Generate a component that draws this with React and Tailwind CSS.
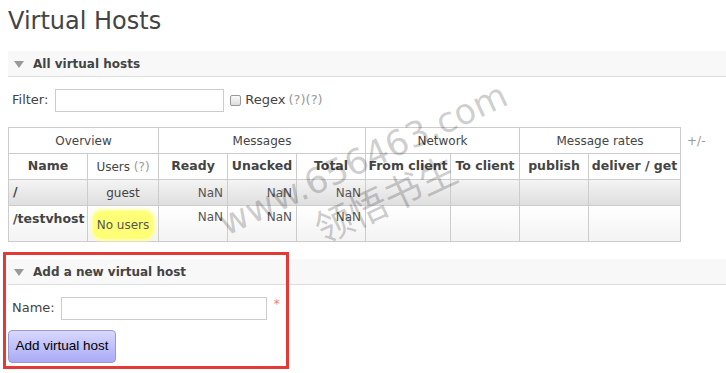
import React from 'react';

const font = { fontFamily: '"DejaVu Sans", Verdana, sans-serif' };

const SectionHeader = ({ title }) => (
    <div className="flex items-center h-[26px] bg-[#f8f8f8] border-b border-[#ddd] pl-[6px]">
        <svg width="10" height="7" viewBox="0 0 10 7" className="mr-[9px] mt-[1px]">
            <polygon points="0,0 10,0 5,7" fill="#999" />
        </svg>
        <span className="text-[12px] font-bold text-[#444]">{title}</span>
    </div>
);

const cols = [79, 71, 69, 69, 69, 85, 69, 69, 92];

const App = () => {
    return (
        <div className="relative w-[726px] h-[373px] bg-white text-[#444] overflow-hidden" style={font}>
            <h1 className="text-[24px] leading-none font-normal pl-[8px] pt-[9px] text-[#444]">Virtual Hosts</h1>

            <div className="ml-[8px] mt-[18px]">
                <SectionHeader title="All virtual hosts" />
                <div className="flex items-center h-[22px] mt-[12px] pl-[4px] text-[13px]">
                    <span>Filter:</span>
                    <input className="ml-[7px] w-[169px] h-[23px] border border-[#ccc] bg-white" />
                    <span className="ml-[6px] w-[11px] h-[11px] rounded-[2px] border border-[#999] bg-gradient-to-b from-[#fafafa] to-[#ddd]" />
                    <span className="ml-[4px]">Regex</span>
                    <span className="ml-[3px] text-[#999]">(?)(?)</span>
                </div>

                <div className="flex items-start mt-[16px]">
                    <table className="table-fixed w-[672px] border-collapse text-[12px]">
                        <colgroup>
                            {cols.map((w, i) => (
                                <col key={i} style={{ width: w }} />
                            ))}
                        </colgroup>
                        <thead>
                            <tr className="h-[26px]">
                                <th colSpan={2} className="border border-[#ccc] font-normal">Overview</th>
                                <th colSpan={3} className="border border-[#ccc] font-normal">Messages</th>
                                <th colSpan={2} className="border border-[#ccc] font-normal">Network</th>
                                <th colSpan={2} className="border border-[#ccc] font-normal">Message rates</th>
                            </tr>
                            <tr className="h-[26px] text-[12.5px]">
                                <th className="border border-[#ccc] font-bold">Name</th>
                                <th className="border border-[#ccc] font-normal text-[12px]">Users <span className="text-[#999]">(?)</span></th>
                                <th className="border border-[#ccc] font-bold">Ready</th>
                                <th className="border border-[#ccc] font-bold">Unacked</th>
                                <th className="border border-[#ccc] font-bold">Total</th>
                                <th className="border border-[#ccc] font-bold whitespace-nowrap">From client</th>
                                <th className="border border-[#ccc] font-bold whitespace-nowrap">To client</th>
                                <th className="border border-[#ccc] font-bold">publish</th>
                                <th className="border border-[#ccc] font-bold whitespace-nowrap">deliver / get</th>
                            </tr>
                        </thead>
                        <tbody>
                            <tr className="h-[26px] bg-gradient-to-b from-[#f4f4f4] to-[#dedede]">
                                <td className="border border-[#ccc] px-[4px] font-bold text-[12.5px]">/</td>
                                <td className="border border-[#ccc] text-center">guest</td>
                                <td className="border border-[#ccc] text-right pr-[4px] text-[#555]">NaN</td>
                                <td className="border border-[#ccc] text-right pr-[4px] text-[#555]">NaN</td>
                                <td className="border border-[#ccc] text-right pr-[4px] text-[#555]">NaN</td>
                                <td className="border border-[#ccc]" />
                                <td className="border border-[#ccc]" />
                                <td className="border border-[#ccc]" />
                                <td className="border border-[#ccc]" />
                            </tr>
                            <tr className="h-[36px] bg-gradient-to-b from-white to-[#f3f3f3]">
                                <td className="border border-[#ccc] px-[4px] font-bold text-[12.5px] align-top pt-[4px]">/testvhost</td>
                                <td className="border border-[#ccc] text-center align-top pt-[5px]">
                                    <span className="inline-block px-[4px] py-[5px] rounded-[9px] bg-[#ffff77] shadow-[0_0_3px_2px_#ffffa0] text-[#555]">No users</span>
                                </td>
                                <td className="border border-[#ccc] text-right pr-[4px] text-[#555] align-top pt-[2px]">NaN</td>
                                <td className="border border-[#ccc] text-right pr-[4px] text-[#555] align-top pt-[2px]">NaN</td>
                                <td className="border border-[#ccc] text-right pr-[4px] text-[#555] align-top pt-[2px]">NaN</td>
                                <td className="border border-[#ccc]" />
                                <td className="border border-[#ccc]" />
                                <td className="border border-[#ccc]" />
                                <td className="border border-[#ccc]" />
                            </tr>
                        </tbody>
                    </table>
                    <span className="ml-[6px] mt-[5px] text-[12px] text-[#999]">+/-</span>
                </div>
            </div>

            <div className="relative ml-[8px] mt-[17px]">
                <SectionHeader title="Add a new virtual host" />
                <div className="flex items-center h-[22px] mt-[12px] pl-[4px] text-[13px]">
                    <span>Name:</span>
                    <input className="ml-[6px] w-[206px] h-[23px] border border-[#ccc] bg-white" />
                    <span className="ml-[7px] -mt-[8px] text-[#f08080] text-[12px]">*</span>
                </div>
                <button
                    className="mt-[11px] h-[33px] w-[108px] rounded-[4px] border border-[#9999cc] bg-gradient-to-b from-[#d8d8ff] to-[#aaaaf5] text-[13.5px] text-black"
                    style={{ fontFamily: '"Liberation Sans", Arial, sans-serif' }}
                >
                    Add virtual host
                </button>
            </div>

            <div className="absolute left-[3px] top-[252px] w-[286px] h-[117px] border-[3px] border-[#e53935] pointer-events-none" />

            <div className="absolute left-[214px] top-[210px] w-[360px] pointer-events-none select-none rotate-[-25deg] origin-top-left text-[rgba(0,0,0,0.2)]">
                <div className="text-[35px] leading-[35px] whitespace-nowrap" style={{ fontFamily: '"DejaVu Sans", sans-serif' }}>www.656463.com</div>
                <div className="text-[38px] leading-[40px] mt-[6px] ml-[84px] whitespace-nowrap" style={{ fontFamily: '"Noto Sans CJK SC", sans-serif' }}>领悟书生</div>
            </div>
        </div>
    );
};

export default App;
